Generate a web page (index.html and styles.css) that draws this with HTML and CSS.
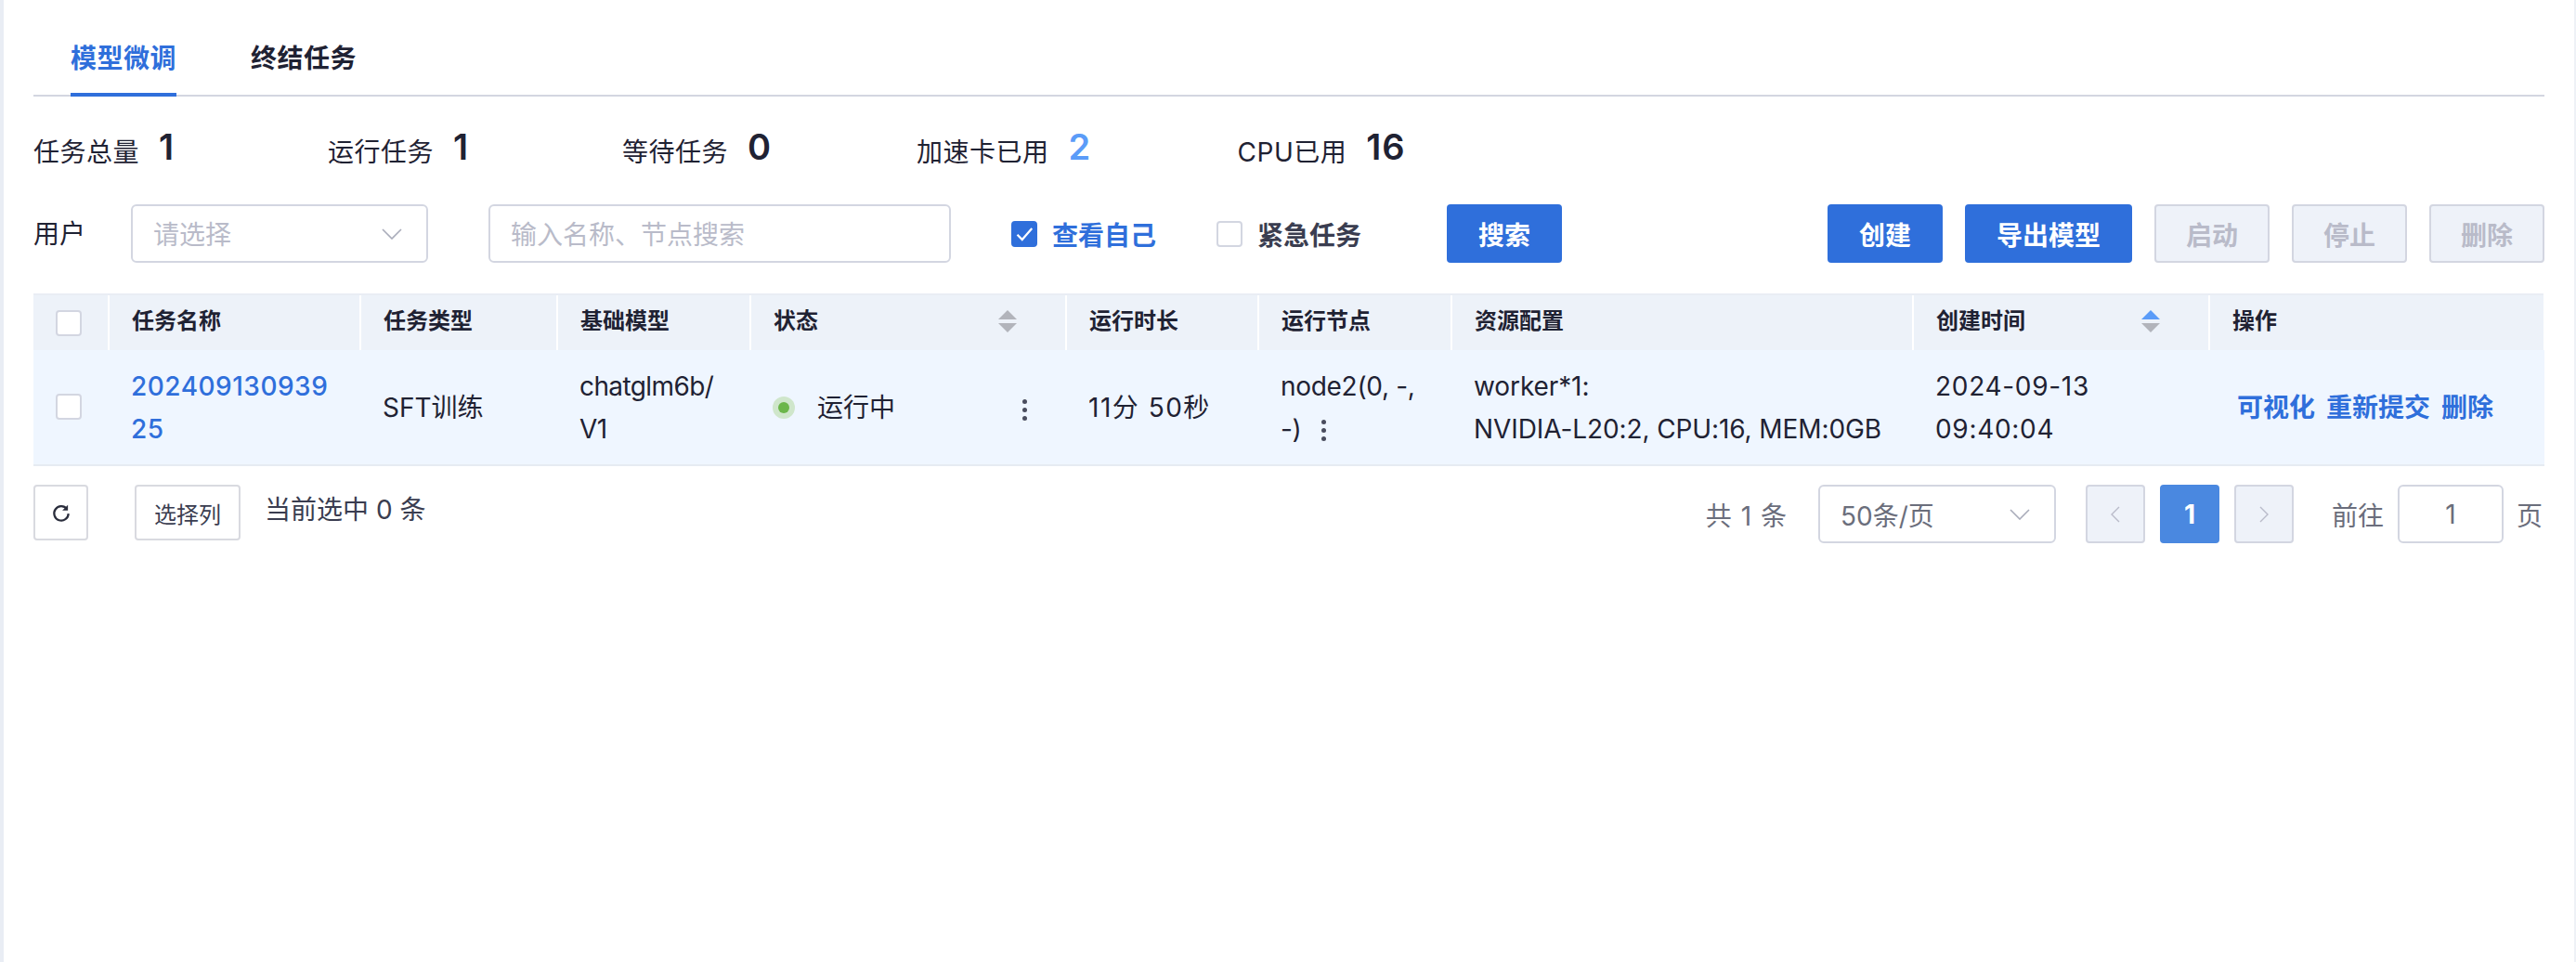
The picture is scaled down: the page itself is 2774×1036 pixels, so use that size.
FILE: index.html
```html
<!DOCTYPE html>
<html lang="zh-CN">
<head>
    <meta charset="UTF-8">
    <title>模型微调</title>
    <link rel="stylesheet" href="styles.css">
</head>
<body>
<div class="page">
    <div class="tabs">
        <div class="tab tab_active">模型微调</div>
        <div class="tab">终结任务</div>
    </div>

    <div class="stats">
        <div class="stat"><span class="stat_label">任务总量</span><span class="stat_value">1</span></div>
        <div class="stat"><span class="stat_label">运行任务</span><span class="stat_value">1</span></div>
        <div class="stat"><span class="stat_label">等待任务</span><span class="stat_value">0</span></div>
        <div class="stat"><span class="stat_label">加速卡已用</span><span class="stat_value stat_blue">2</span></div>
        <div class="stat"><span class="stat_label">CPU已用</span><span class="stat_value">16</span></div>
    </div>

    <div class="filters">
        <span class="filter_label">用户</span>
        <div class="field user_select">
            <span class="placeholder">请选择</span>
            <svg class="chevron" viewBox="0 0 22 12"><path d="M1 1l10 10L21 1"/></svg>
        </div>
        <div class="field search_input"><span class="placeholder">输入名称、节点搜索</span></div>
        <div class="check check_on">
            <span class="box box_on"><svg viewBox="0 0 16 16"><path d="M3 8.500l3.500 3.500 7-8"/></svg></span>
            <span>查看自己</span>
        </div>
        <div class="check">
            <span class="box"></span>
            <span>紧急任务</span>
        </div>
        <button class="btn btn_primary btn_search">搜索</button>
        <div class="actions">
            <button class="btn btn_primary">创建</button>
            <button class="btn btn_primary btn_wide">导出模型</button>
            <button class="btn btn_disabled">启动</button>
            <button class="btn btn_disabled">停止</button>
            <button class="btn btn_disabled">删除</button>
        </div>
    </div>

    <table class="jobs">
        <colgroup>
            <col class="col_check"><col class="col_name"><col class="col_type"><col class="col_model"><col class="col_status">
            <col class="col_time"><col class="col_node"><col class="col_res"><col class="col_created"><col class="col_ops">
        </colgroup>
        <thead>
            <tr>
                <th class="cell_check"><span class="box"></span></th>
                <th>任务名称</th>
                <th>任务类型</th>
                <th>基础模型</th>
                <th><div class="th_sort">状态<span class="sort"><i class="sort_up"></i><i class="sort_down"></i></span></div></th>
                <th>运行时长</th>
                <th>运行节点</th>
                <th>资源配置</th>
                <th><div class="th_sort">创建时间<span class="sort"><i class="sort_up sort_active"></i><i class="sort_down"></i></span></div></th>
                <th>操作</th>
            </tr>
        </thead>
        <tbody>
            <tr>
                <td class="cell_check"><span class="box"></span></td>
                <td><a class="job_link">202409130939<br>25</a></td>
                <td>SFT训练</td>
                <td class="text_model">chatglm6b/<br>V1</td>
                <td>
                    <div class="status">
                        <span class="dot"></span>
                        <span class="status_text">运行中</span>
                        <span class="kebab"><i></i><i></i><i></i></span>
                    </div>
                </td>
                <td class="text_duration">11分 50秒</td>
                <td class="text_node">node2(0, -,<br>-)<span class="kebab kebab_inline"><i></i><i></i><i></i></span></td>
                <td class="text_res">worker*1:<br>NVIDIA-L20:2, CPU:16, MEM:0GB</td>
                <td class="text_date">2024-09-13<br>09:40:04</td>
                <td class="cell_ops"><a>可视化</a><a>重新提交</a><a>删除</a></td>
            </tr>
        </tbody>
    </table>

    <div class="footer">
        <button class="tool_btn refresh">
            <svg viewBox="0 0 20 20"><path d="M15.500 6.500A7 7 0 1 0 17 11"/><path class="fill" d="M16.500 2.500v5.500h-5.500z"/></svg>
        </button>
        <button class="tool_btn columns">选择列</button>
        <span class="selected">当前选中 0 条</span>
        <div class="pager">
            <span class="total">共 1 条</span>
            <div class="field size_select">
                <span>50条/页</span>
                <svg class="chevron" viewBox="0 0 22 12"><path d="M1 1l10 10L21 1"/></svg>
            </div>
            <div class="pages">
                <span class="page_btn"><svg viewBox="0 0 10 18"><path d="M9 1L1 9l8 8"/></svg></span>
                <span class="page_btn page_current">1</span>
                <span class="page_btn"><svg viewBox="0 0 10 18"><path d="M1 1l8 8-8 8"/></svg></span>
            </div>
            <span class="goto">前往</span>
            <div class="field goto_input">1</div>
            <span class="goto">页</span>
        </div>
    </div>
</div>
</body>
</html>
```

FILE: styles.css
```css
* {
    box-sizing: border-box;
    font-family: Inter, "Noto Sans CJK SC", sans-serif;
}

html, body {
    margin: 0;
    height: 100%;
    background: #fff;
}

.page {
    min-height: 1036px;
    padding: 0 32px 0 32px;
    border-left: 4px solid #e9edf4;
    border-right: 2px solid #eef1f6;
    color: #1f2233;
    font-size: 28px;
}

.tabs {
    display: flex;
    width: 2704px;
    height: 104px;
    padding-left: 40px;
    border-bottom: 2px solid #d3d6e1;
    gap: 80px;
}

.tab {
    height: 104px;
    padding-top: 43px;
    line-height: 40px;
    font-weight: 600;
    letter-spacing: .5px;
}

.tab_active {
    color: #2f6fdb;
    border-bottom: 4px solid #2f6fdb;
}

.stats {
    display: flex;
    height: 116px;
    padding-top: 34px;
    line-height: 40px;
}

.stat_label {
    margin-right: 21px;
    letter-spacing: .5px;
}

.stat_value {
    display: inline-block;
    width: 182px;
    font-size: 38px;
    font-weight: 600;
    letter-spacing: 1px;
    vertical-align: 2px;
}

.stat_blue {
    color: #5b9cf8;
}

.stat:last-child .stat_value {
    width: auto;
}

.filters {
    display: flex;
    align-items: center;
    height: 63px;
}

.filter_label {
    width: 105px;
    padding-bottom: 4px;
}

.field {
    display: flex;
    align-items: center;
    height: 63px;
    border: 2px solid #d3d6e1;
    border-radius: 6px;
    background: #fff;
}

.placeholder {
    color: #b9bbc9;
    padding-bottom: 2px;
}

.chevron {
    width: 22px;
    height: 12px;
    margin-left: auto;
    fill: none;
    stroke: #a9acba;
    stroke-width: 1.6;
}

.user_select {
    width: 320px;
    padding: 0 26px 0 22px;
}

.search_input {
    width: 498px;
    margin-left: 65px;
    padding-left: 22px;
}

.check {
    display: flex;
    align-items: center;
    gap: 16px;
    color: #3a3d50;
    font-weight: 600;
}

.check_on {
    margin-left: 65px;
    width: 221px;
    color: #2f6fdb;
}

.box {
    display: inline-block;
    width: 28px;
    height: 28px;
    border: 2px solid #d3d6e1;
    border-radius: 4px;
    background: #fff;
    vertical-align: middle;
}

.box_on {
    background: #2f6fdb;
    border-color: #2f6fdb;
}

.box_on svg {
    display: block;
    fill: none;
    stroke: #fff;
    stroke-width: 1.5;
}

.btn {
    height: 63px;
    width: 124px;
    border: 2px solid transparent;
    border-radius: 4px;
    font-size: 28px;
    font-weight: 600;
    padding: 0;
}

.btn_primary {
    background: #2f6fdb;
    color: #fff;
}

.btn_wide {
    width: 180px;
}

.btn_disabled {
    background: #eef2f9;
    border-color: #d3d6e1;
    color: #b9bbc9;
}

.btn_search {
    margin-left: 92px;
}

.actions {
    display: flex;
    gap: 24px;
    margin-left: auto;
}

.jobs {
    width: 2704px;
    margin-top: 33px;
    border-collapse: collapse;
    table-layout: fixed;
}

.col_check { width: 81px; }
.col_name { width: 271px; }
.col_type { width: 212px; }
.col_model { width: 208px; }
.col_status { width: 340px; }
.col_time { width: 207px; }
.col_node { width: 208px; }
.col_res { width: 497px; }
.col_created { width: 319px; }
.col_ops { width: 361px; }

.jobs th {
    height: 60px;
    padding: 0 24px 4px;
    background: #edf2f9;
    border-left: 2px solid #fff;
    border-top: 2px solid #e9edf4;
    text-align: left;
    font-size: 24px;
    font-weight: 600;
    line-height: 32px;
}

.jobs th:first-child, .jobs td:first-child {
    border-left: 0;
}

.jobs th:last-child {
    border-right: 2px solid #fff;
}

.jobs td {
    height: 124px;
    padding: 0 24px;
    background: #eff6ff;
    border-bottom: 2px solid #e6ebf2;
    line-height: 46px;
    font-size: 28px;
    white-space: nowrap;
}

.jobs .cell_check {
    padding: 0 0 0 24px;
}

.cell_check .box {
    display: block;
}

.jobs td.cell_check .box {
    margin-top: -2px;
}

.text_model {
    letter-spacing: -.6px;
}

.text_duration {
    letter-spacing: 1.5px;
}

.text_node {
    letter-spacing: -.3px;
}

.text_res {
    letter-spacing: -.1px;
}

.text_date {
    letter-spacing: .7px;
}

.th_sort {
    display: flex;
    align-items: center;
    justify-content: space-between;
}

.sort {
    display: flex;
    flex-direction: column;
    gap: 4px;
    margin-right: 28px;
}

.sort i {
    display: block;
    width: 0;
    height: 0;
    border-left: 10px solid transparent;
    border-right: 10px solid transparent;
}

.sort_up {
    border-bottom: 10px solid #b2b4bb;
}

.sort_down {
    border-top: 10px solid #b2b4bb;
}

.sort .sort_active {
    border-bottom-color: #5b9cf8;
}

.job_link {
    color: #2f6fdb;
    font-weight: 500;
    letter-spacing: .5px;
}

.status {
    display: flex;
    align-items: center;
}

.dot {
    position: relative;
    width: 24px;
    height: 24px;
    margin-right: 24px;
    border-radius: 50%;
    background: #cfe6cb;
}

.dot::after {
    content: "";
    position: absolute;
    left: 6px;
    top: 6px;
    width: 12px;
    height: 12px;
    border-radius: 50%;
    background: #6bb64a;
}

.status_text {
    flex: 1;
}

.kebab {
    display: inline-flex;
    flex-direction: column;
    gap: 4px;
    margin: 6px 18px 0 0;
}

.kebab i {
    display: block;
    width: 5px;
    height: 5px;
    border-radius: 50%;
    background: #4a4d5e;
}

.kebab_inline {
    margin: 0 0 0 21px;
    vertical-align: middle;
}

.jobs .cell_ops {
    padding-left: 30px;
    padding-right: 0;
}

.cell_ops a {
    margin-right: 12px;
    color: #2f6fdb;
    font-weight: 600;
}

.footer {
    display: flex;
    align-items: flex-start;
    width: 2704px;
    margin-top: 20px;
}

.tool_btn {
    height: 60px;
    border: 2px solid #d9dae0;
    border-radius: 4px;
    background: #fff;
    padding: 0;
    color: #3a3d50;
    font-size: 24px;
}

.refresh {
    width: 59px;
}

.refresh svg {
    display: block;
    width: 22px;
    height: 22px;
    margin: auto;
    fill: none;
    stroke: #2a2d3c;
    stroke-width: 2;
}

.refresh .fill {
    fill: #2a2d3c;
    stroke: none;
}

.columns {
    width: 114px;
    margin-left: 50px;
}

.selected {
    margin-left: 26px;
    line-height: 54px;
    color: #3a3d50;
}

.pager {
    display: flex;
    align-items: center;
    height: 63px;
    margin-left: auto;
    padding-right: 2px;
    color: #6b6e7c;
}

.total {
    margin-right: 33px;
    letter-spacing: 1px;
}

.size_select {
    width: 256px;
    padding: 0 26px 0 22px;
}

.pages {
    display: flex;
    gap: 16px;
    margin: 0 41px 0 32px;
}

.page_btn {
    display: flex;
    align-items: center;
    justify-content: center;
    width: 64px;
    height: 63px;
    border: 2px solid #d3d6e1;
    border-radius: 4px;
    background: #eef2f9;
}

.page_btn svg {
    width: 10px;
    height: 18px;
    fill: none;
    stroke: #b9bbc9;
    stroke-width: 1.4;
}

.page_current {
    background: #4a88e0;
    border-color: #4a88e0;
    color: #fff;
    font-weight: 700;
}

.goto_input {
    justify-content: center;
    width: 114px;
    margin: 0 14px 0 15px;
}
```
